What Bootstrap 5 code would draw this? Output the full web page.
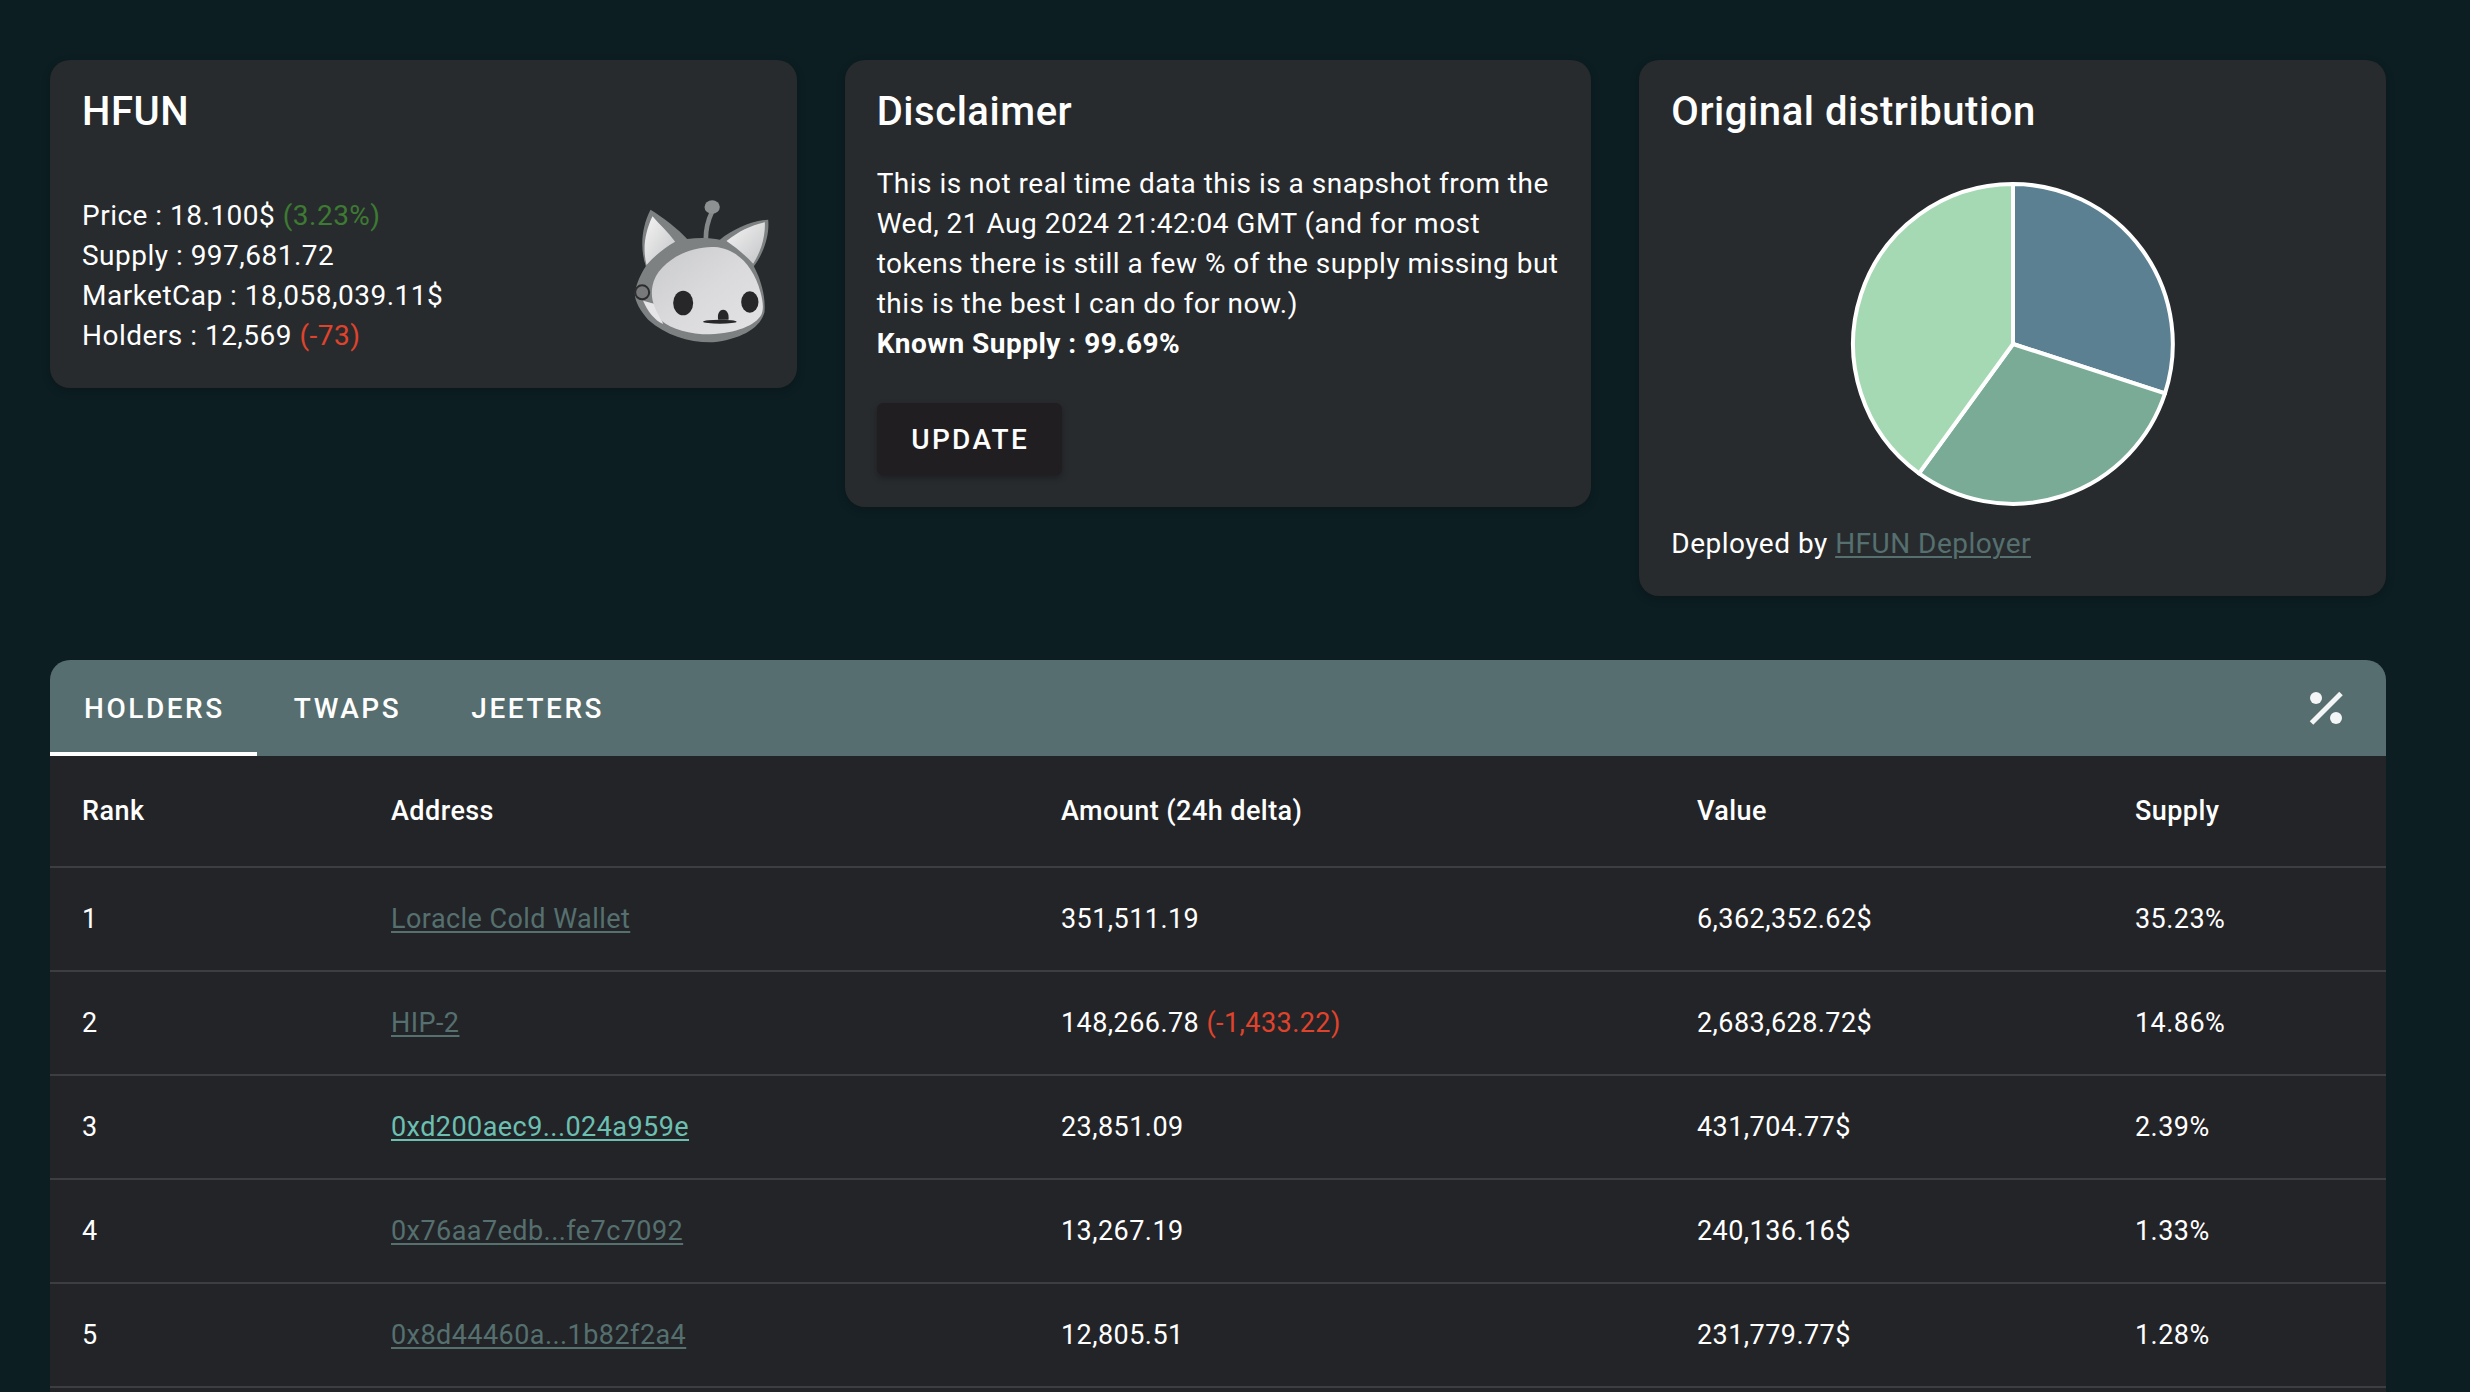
<!doctype html>
<html lang="en">
<head>
<meta charset="utf-8">
<title>HFUN</title>
<link rel="stylesheet" href="https://cdn.jsdelivr.net/npm/bootstrap@5.3.0/dist/css/bootstrap.min.css">
<style>
html,body{height:100vh;overflow:hidden}
body{background:#0c1e22;color:#fff;font-family:Roboto,"Liberation Sans",sans-serif;font-size:28px;line-height:40px;letter-spacing:.49px;padding:60px 84px 0 50px}
.dash-row{--bs-gutter-x:48px;--bs-gutter-y:0}
.panel{background:#282b2e;border-radius:20px;padding:32px;box-shadow:0 3px 8px rgba(0,0,0,.22)}
.panel-title{font-size:40px;line-height:40px;font-weight:500;letter-spacing:.55px;margin:0;color:#fff}
.token-panel{height:328px}
.token-body{margin-top:64px;height:160px}
.token-stats{line-height:40px}
.up{color:#3d7a32}
.down{color:#e0432b}
.cat{width:137px;height:145px;margin:-10px -5px 0 0;flex:none}
.note{margin-top:32px}
.note b{font-weight:700}
.update-btn{--bs-btn-bg:#211e22;--bs-btn-color:#fff;--bs-btn-border-color:#211e22;--bs-btn-hover-bg:#211e22;--bs-btn-hover-color:#fff;--bs-btn-hover-border-color:#211e22;--bs-btn-border-radius:6px;margin-top:39px;width:185px;height:72px;font-size:28px;font-weight:500;letter-spacing:2.3px;padding:2px 0 0 2px;box-shadow:0 3px 6px rgba(0,0,0,.3)}
.pie{width:328px;height:328px;display:block}
.pie-wrap{margin-top:48px}
.dist-foot{margin-top:16px}
a.dull{color:#55706f;text-decoration-thickness:2px;text-underline-offset:3px}
a.seen{color:#6cc0b2;text-decoration-thickness:2px;text-underline-offset:3px}
.holders{margin-top:64px;background:#232428;border-radius:20px 20px 0 0;padding-bottom:40px}
.tabbar{background:#566e6f;border-radius:20px 20px 0 0;height:96px}
.tabbar .nav-link{color:#fff;font-size:28px;font-weight:500;letter-spacing:2.55px;padding:0 33px;height:96px;line-height:98px;border-bottom:4px solid transparent;text-transform:uppercase}
.tabbar .nav-link.active{border-bottom-color:#fff;padding:0 32px 0 34px}
.pct-btn{--bs-btn-padding-x:0;--bs-btn-padding-y:0;--bs-btn-border-width:0;width:60px;height:60px;margin-right:30px;display:flex;align-items:center;justify-content:center}
.holders-table{--bs-table-bg:transparent;--bs-table-color:#fff;--bs-table-border-color:#3c3e41;margin:0;table-layout:fixed;width:100%}
.holders-table th,.holders-table td{padding:0 0 0 32px;border-bottom:2px solid #3c3e41;vertical-align:middle;font-size:27px;letter-spacing:.44px;color:#fff;background:transparent}
.holders-table th{height:111px;font-weight:500}
.holders-table td{height:104px;font-weight:400}
.c-rank{width:309px}.c-addr{width:670px}.c-amt{width:636px}.c-val{width:438px}
</style>
</head>
<body>
<div class="row row-cols-3 dash-row align-items-start">
  <div class="col">
    <div class="panel token-panel">
      <h5 class="panel-title">HFUN</h5>
      <div class="d-flex justify-content-between align-items-center token-body">
        <div class="token-stats">
          <div>Price : 18.100$ <span class="up">(3.23%)</span></div>
          <div>Supply : 997,681.72</div>
          <div>MarketCap : 18,058,039.11$</div>
          <div>Holders : 12,569 <span class="down">(-73)</span></div>
        </div>
        <svg class="cat" viewBox="100 60 410 435" aria-label="HFUN logo">
          <defs>
            <linearGradient id="face" x1="0" y1="0" x2="1" y2="1"><stop offset="0" stop-color="#c9cacb"/><stop offset=".5" stop-color="#dadadc"/><stop offset="1" stop-color="#e3e3e6"/></linearGradient>
            <linearGradient id="ear" x1="0" y1="0" x2="1" y2="1"><stop offset="0" stop-color="#f4f4f5"/><stop offset="1" stop-color="#c4c5c6"/></linearGradient>
          </defs>
          <path d="M318 180C318 150 324 125 336 100" fill="none" stroke="#85898a" stroke-width="14" stroke-linecap="round"/>
          <ellipse cx="337" cy="84" rx="23" ry="20" fill="#8e9192"/>
          <path d="M152 92C190 115 235 150 262 180C295 176 330 176 360 182C400 150 455 125 505 122C510 170 490 225 462 262C482 300 498 350 494 400C480 450 420 480 340 490C270 492 200 470 145 422C120 395 100 360 106 335C112 310 125 280 138 262C122 215 122 150 152 92Z" fill="#7d8182"/>
          <path d="M158 112C178 135 205 160 226 188C195 205 165 230 140 258C128 210 135 160 158 112Z" fill="url(#ear)"/>
          <path d="M495 130C455 138 415 158 380 186C408 205 438 230 460 254C482 220 497 175 495 130Z" fill="url(#ear)"/>
          <path d="M130 365L165 375L190 435C165 425 142 395 130 365Z" fill="#e6e6e8"/>
          <path d="M345 204C410 208 462 262 482 340C490 370 492 392 484 408C465 440 410 462 330 466C270 466 215 450 185 425C165 390 150 360 158 320C170 255 260 200 345 204Z" fill="url(#face)"/>
          <circle cx="127" cy="340" r="21" fill="#77797a" stroke="#2c2d2f" stroke-width="6"/>
          <ellipse cx="250" cy="372" rx="30" ry="37" fill="#27272a"/>
          <ellipse cx="450" cy="369" rx="26" ry="32" fill="#27272a"/>
          <path d="M355 422C352 405 358 392 370 392C382 392 388 405 386 422Z" fill="#27272a"/>
          <ellipse cx="360" cy="428" rx="50" ry="6" fill="#27272a"/>
        </svg>
      </div>
    </div>
  </div>
  <div class="col">
    <div class="panel">
      <h5 class="panel-title">Disclaimer</h5>
      <div class="note">This is not real time data this is a snapshot from the Wed, 21 Aug 2024 21:42:04 GMT (and for most tokens there is still a few % of the supply missing but this is the best I can do for now.)<br><b>Known Supply : 99.69%</b></div>
      <button type="button" class="btn update-btn">UPDATE</button>
    </div>
  </div>
  <div class="col">
    <div class="panel">
      <h5 class="panel-title">Original distribution</h5>
      <div class="d-flex justify-content-center pie-wrap">
        <svg class="pie" viewBox="-164 -164 328 328" aria-label="Pie chart">
          <g stroke="#fff" stroke-width="4" stroke-linejoin="round">
            <path d="M0 0L0 -160A160 160 0 0 1 152 49.4Z" fill="#5b8091"/>
            <path d="M0 0L152 49.4A160 160 0 0 1 -94 129.4Z" fill="#79ab96"/>
            <path d="M0 0L-94 129.4A160 160 0 0 1 0 -160Z" fill="#a5d9b3"/>
          </g>
        </svg>
      </div>
      <div class="dist-foot">Deployed by <a class="dull" href="#">HFUN Deployer</a></div>
    </div>
  </div>
</div>
<div class="holders">
  <div class="d-flex justify-content-between align-items-center tabbar">
    <ul class="nav">
      <li class="nav-item"><a class="nav-link active" href="#">Holders</a></li>
      <li class="nav-item ms-1"><a class="nav-link" href="#">Twaps</a></li>
      <li class="nav-item ms-1"><a class="nav-link" href="#">Jeeters</a></li>
    </ul>
    <button type="button" class="btn pct-btn" aria-label="Toggle percent">
      <svg width="36" height="36" viewBox="0 0 36 36"><circle cx="8" cy="8" r="6" fill="#f3f5f6"/><circle cx="28" cy="28" r="6" fill="#f3f5f6"/><path d="M33 3.500L3.500 33" stroke="#f3f5f6" stroke-width="5"/></svg>
    </button>
  </div>
  <table class="table holders-table">
    <colgroup><col class="c-rank"><col class="c-addr"><col class="c-amt"><col class="c-val"><col></colgroup>
    <thead><tr><th>Rank</th><th>Address</th><th>Amount (24h delta)</th><th>Value</th><th>Supply</th></tr></thead>
    <tbody>
      <tr><td>1</td><td><a class="dull" href="#">Loracle Cold Wallet</a></td><td>351,511.19</td><td>6,362,352.62$</td><td>35.23%</td></tr>
      <tr><td>2</td><td><a class="dull" href="#">HIP-2</a></td><td>148,266.78 <span class="down">(-1,433.22)</span></td><td>2,683,628.72$</td><td>14.86%</td></tr>
      <tr><td>3</td><td><a class="seen" href="#">0xd200aec9...024a959e</a></td><td>23,851.09</td><td>431,704.77$</td><td>2.39%</td></tr>
      <tr><td>4</td><td><a class="dull" href="#">0x76aa7edb...fe7c7092</a></td><td>13,267.19</td><td>240,136.16$</td><td>1.33%</td></tr>
      <tr><td>5</td><td><a class="dull" href="#">0x8d44460a...1b82f2a4</a></td><td>12,805.51</td><td>231,779.77$</td><td>1.28%</td></tr>
    </tbody>
  </table>
</div>
<script src="https://cdn.jsdelivr.net/npm/bootstrap@5.3.0/dist/js/bootstrap.bundle.min.js"></script>
</body>
</html>
